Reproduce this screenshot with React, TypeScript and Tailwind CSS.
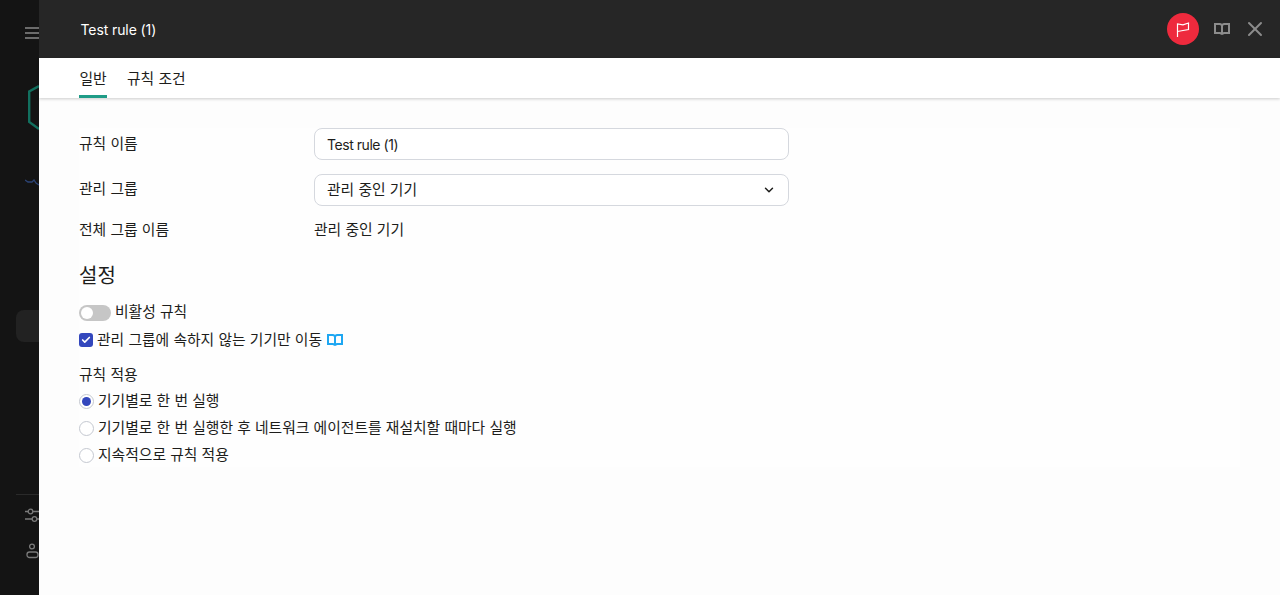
import React from 'react';
import { ChevronDown, X, Check } from 'lucide-react';

function BookIcon({ color, className }: { color: string; className?: string }) {
  return (
    <svg className={className} width="16" height="14" viewBox="0 0 16 14" fill="none" stroke={color} strokeWidth="2">
      <path d="M1 2h5l2 1 2-1h5v9h-5l-2 1-2-1H1z" />
      <path d="M8 3v9" />
    </svg>
  );
}

function Sidebar() {
  return (
    <div className="w-[39px] shrink-0 bg-[#141414] flex flex-col overflow-hidden">
      <div className="pl-[25px] pt-[27px] flex flex-col gap-[3.500px]">
        <div className="w-[14px] h-[1.500px] bg-[#6b6b6b]" />
        <div className="w-[14px] h-[1.500px] bg-[#6b6b6b]" />
        <div className="w-[14px] h-[1.500px] bg-[#6b6b6b]" />
      </div>
      <svg className="ml-[28px] mt-[46px] shrink-0" width="11" height="45" viewBox="0 0 11 45" fill="none">
        <path d="M11 1 1.200 6.500V37L11 44" stroke="#12705f" strokeWidth="2.400" />
      </svg>
      <svg className="ml-[25px] mt-[49px] shrink-0" width="14" height="9" viewBox="0 0 14 9" fill="none">
        <path d="M0 1 3 3 7 3 9 1 11 4 14 6" stroke="#2c4476" strokeWidth="1.300" />
      </svg>
      <div className="ml-[16px] mt-[122px] w-[40px] h-[32px] shrink-0 rounded-lg bg-[#222222]" />
      <div className="ml-[16px] mt-[152px] w-[40px] h-px shrink-0 bg-[#2a2a2a]" />
      <svg className="ml-[25px] mt-[12px] shrink-0" width="14" height="16" viewBox="0 0 14 16" fill="none" stroke="#7a7a7a" strokeWidth="1.300">
        <path d="M0 4.500H3M8 4.500H14M0 12H7M12 12H14" />
        <circle cx="5.500" cy="4.500" r="2.300" />
        <circle cx="9.500" cy="12" r="2.300" />
      </svg>
      <svg className="ml-[26px] mt-[20px] shrink-0" width="13" height="16" viewBox="0 0 13 16" fill="none" stroke="#7a7a7a" strokeWidth="1.300">
        <circle cx="6" cy="3.500" r="2.400" />
        <rect x="1" y="9" width="11" height="5.500" rx="2.500" />
      </svg>
    </div>
  );
}

function Radio({ checked, label }: { checked?: boolean; label: string }) {
  return (
    <div className="flex items-center h-[27px] gap-[4px]">
      <span className="w-[15px] h-[15px] rounded-full border border-[#c4c8d0] bg-white flex items-center justify-center">
        {checked && <span className="w-[9px] h-[9px] rounded-full bg-[#3347bd]" />}
      </span>
      <span className="-mt-[2px]">{label}</span>
    </div>
  );
}

function Row({ label, children, className, labelClass }: { label: string; children: React.ReactNode; className?: string; labelClass?: string }) {
  return (
    <div className={`flex items-center ${className ?? ''}`}>
      <div className={`w-[235px] ${labelClass ?? '-mt-[2px]'}`}>{label}</div>
      {children}
    </div>
  );
}

export default function App() {
  return (
    <div className="flex h-[595px] w-[1280px] overflow-hidden" style={{ fontFamily: 'Inter, "Noto Sans CJK KR", sans-serif' }}>
      <Sidebar />
      <div className="flex-1 flex flex-col bg-[#fdfdfd] text-[14.800px] text-[#1d1d1b]">
        <div className="h-[58px] shrink-0 bg-[#262626] flex items-center pl-[41.500px] pr-[13px] text-white">
          <span className="text-[14px] tracking-[-0.1px]">Test rule (1)</span>
          <div className="ml-auto flex items-center">
            <div className="w-[32px] h-[32px] rounded-full bg-[#ee2a3d] flex items-center justify-center">
              <svg width="16" height="17" viewBox="0 0 16 17" fill="none" stroke="white" strokeWidth="1.200">
                <path d="M2.500 16V3L8 3.800 13.500 2V8.500L8 9.500 2.500 10.500" />
              </svg>
            </div>
            <BookIcon color="#8c8c8c" className="ml-[15px]" />
            <X className="ml-[13px] w-[24px] h-[24px] text-[#8c8c8c]" strokeWidth={2} />
          </div>
        </div>
        <div className="h-[40px] shrink-0 bg-white shadow-[0_1px_3px_rgba(0,0,0,0.2)] flex pl-[40px] gap-[20px] z-10">
          <div className="w-[28px] h-full flex items-center justify-center border-b-[3px] border-[#1f9c87] pt-[5px]">일반</div>
          <div className="h-full flex items-center border-b-[3px] border-transparent pt-[5px]">규칙 조건</div>
        </div>
        <div className="mt-[30px] mx-[40px] h-[339px] bg-[#fefefe]">
          <Row label="규칙 이름" labelClass="-mt-[0px]">
            <div className="w-[475px] h-[32px] rounded-lg border border-[#d5d8de] bg-white px-[12px] flex items-center text-[14px] tracking-[-0.45px]">Test rule (1)</div>
          </Row>
          <Row label="관리 그룹" className="mt-[14px]">
            <div className="w-[475px] h-[32px] rounded-lg border border-[#d5d8de] bg-white px-[12px] flex items-center justify-between">
              <span>관리 중인 기기</span>
              <ChevronDown className="w-[14px] h-[14px]" strokeWidth={2.500} />
            </div>
          </Row>
          <Row label="전체 그룹 이름" className="mt-[15px]">
            <span className="-mt-[2px]">관리 중인 기기</span>
          </Row>
          <div className="mt-[21px] text-[20px] leading-[28px]">설정</div>
          <div className="mt-[12px] flex items-center gap-[4px] h-[22px]">
            <span className="relative w-[32px] h-[16px] rounded-full bg-[#c6c6c6]">
              <span className="absolute left-[2px] top-[2px] w-[12px] h-[12px] rounded-full bg-white" />
            </span>
            <span className="-mt-[2px]">비활성 규칙</span>
          </div>
          <div className="mt-[5px] flex items-center gap-[4px] h-[22px]">
            <span className="w-[14px] h-[14px] rounded-[3px] bg-[#3347bd] flex items-center justify-center">
              <Check className="w-[10px] h-[10px] text-white" strokeWidth={4} />
            </span>
            <span className="-mt-[1px]">관리 그룹에 속하지 않는 기기만 이동</span>
            <BookIcon color="#1ea7f2" className="ml-[1px]" />
          </div>
          <div className="mt-[13px] h-[22px] flex items-center">규칙 적용</div>
          <div className="mt-[2px]">
            <Radio checked label="기기별로 한 번 실행" />
            <Radio label="기기별로 한 번 실행한 후 네트워크 에이전트를 재설치할 때마다 실행" />
            <Radio label="지속적으로 규칙 적용" />
          </div>
        </div>
      </div>
    </div>
  );
}
